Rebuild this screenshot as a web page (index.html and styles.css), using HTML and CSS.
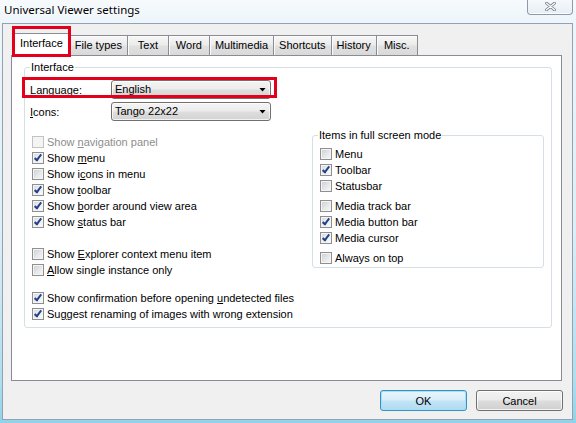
FILE: index.html
```html
<!DOCTYPE html>
<html>
<head>
<meta charset="utf-8">
<title>Universal Viewer settings</title>
<link rel="stylesheet" href="styles.css">
</head>
<body>
<div class="window">
  <div class="titlebar">
    <span class="title">Universal Viewer settings</span>
    <button class="close" aria-label="Close">
      <svg width="11" height="9" viewBox="0 0 11 9">
        <path d="M1.5 1.2 L9.5 7.8 M9.5 1.2 L1.5 7.8" stroke="#76828f" stroke-width="2.8" stroke-linecap="round"/>
        <path d="M1.5 1.2 L9.5 7.8 M9.5 1.2 L1.5 7.8" stroke="#ffffff" stroke-width="1.2" stroke-linecap="round"/>
      </svg>
    </button>
  </div>
  <div class="client">
    <div class="tabs">
      <div class="tab active">Interface</div>
      <div class="tab">File types</div>
      <div class="tab">Text</div>
      <div class="tab">Word</div>
      <div class="tab">Multimedia</div>
      <div class="tab">Shortcuts</div>
      <div class="tab">History</div>
      <div class="tab">Misc.</div>
    </div>
    <div class="panel">
      <fieldset class="group main">
        <legend>Interface</legend>
        <div class="field lang">
          <span class="label"><u>L</u>anguage:</span>
          <div class="combo"><span>English</span><span class="arrow"></span></div>
        </div>
        <div class="field">
          <span class="label"><u>I</u>cons:</span>
          <div class="combo"><span>Tango 22x22</span><span class="arrow"></span></div>
        </div>
        <div class="columns">
          <div class="options">
            <label class="chk disabled"><span class="box"></span><span class="text">Show <u>n</u>avigation panel</span></label>
            <label class="chk"><span class="box on"></span><span class="text">Show <u>m</u>enu</span></label>
            <label class="chk"><span class="box"></span><span class="text">Show i<u>c</u>ons in menu</span></label>
            <label class="chk"><span class="box on"></span><span class="text">Show <u>t</u>oolbar</span></label>
            <label class="chk"><span class="box on"></span><span class="text">Show <u>b</u>order around view area</span></label>
            <label class="chk"><span class="box on"></span><span class="text">Show <u>s</u>tatus bar</span></label>
            <label class="chk gap16"><span class="box"></span><span class="text">Show <u>E</u>xplorer context menu item</span></label>
            <label class="chk"><span class="box"></span><span class="text"><u>A</u>llow single instance only</span></label>
            <label class="chk gap12"><span class="box on"></span><span class="text">Show confirmation before opening <u>u</u>ndetected files</span></label>
            <label class="chk"><span class="box on"></span><span class="text">Su<u>g</u>gest renaming of images with wrong extension</span></label>
          </div>
          <fieldset class="group full">
            <legend>Items in full screen mode</legend>
            <label class="chk"><span class="box"></span><span class="text">Menu</span></label>
            <label class="chk"><span class="box on"></span><span class="text">Toolbar</span></label>
            <label class="chk"><span class="box"></span><span class="text">Statusbar</span></label>
            <label class="chk gap4"><span class="box"></span><span class="text">Media track bar</span></label>
            <label class="chk"><span class="box on"></span><span class="text">Media button bar</span></label>
            <label class="chk"><span class="box on"></span><span class="text">Media cursor</span></label>
            <label class="chk gap4"><span class="box"></span><span class="text">Always on top</span></label>
          </fieldset>
        </div>
      </fieldset>
    </div>
    <div class="buttons">
      <button class="btn default">OK</button>
      <button class="btn">Cancel</button>
    </div>
  </div>
</div>
</body>
</html>
```
FILE: styles.css
```css
html, body {
  margin: 0;
  padding: 0;
}

body {
  width: 576px;
  height: 423px;
  overflow: hidden;
  font: 11px "Liberation Sans", Arial, sans-serif;
  color: #000;
  background: linear-gradient(180deg, #f6fafd 0px, #edf5fa 24px, #dceef7 55%, #addef0 90%, #8fd2ea 100%);
}

.window {
  display: flex;
  flex-direction: column;
  width: 576px;
  height: 423px;
}

.titlebar {
  height: 23px;
  flex: none;
  display: flex;
  align-items: flex-start;
  padding-left: 4px;
}

.title {
  font: 11.5px/20px "Noto Sans", "Liberation Sans", sans-serif;
  color: #000;
  text-shadow: 0 0 6px #fff, 0 0 3px #fff;
}

.close {
  margin-left: auto;
  margin-right: 3px;
  margin-top: -1px;
  width: 46px;
  height: 16px;
  padding: 0;
  box-sizing: border-box;
  border: 1px solid #8e9aa7;
  border-top: none;
  border-radius: 0 0 4px 4px;
  background: linear-gradient(180deg, #f7fafc, #e6eef5);
  box-shadow: inset 0 -1px 0 #fff;
  display: flex;
  align-items: center;
  justify-content: center;
}

.close svg {
  display: block;
  margin-top: -1px;
}

.client {
  flex: none;
  margin: 0 3px 0 2px;
  height: 397px;
  box-sizing: border-box;
  border: 1px solid #93a2b1;
  background: #f0f0f0;
  padding: 9px 10px 8px 8px;
  display: flex;
  flex-direction: column;
}

.tabs {
  display: flex;
  align-items: flex-end;
  height: 22px;
  flex: none;
  padding-left: 2px;
  position: relative;
  z-index: 1;
}

.tab {
  height: 20px;
  box-sizing: border-box;
  min-width: 42px;
  padding: 0 5px;
  margin-right: -1px;
  border: 1px solid #898c95;
  border-bottom: none;
  line-height: 19px;
  text-align: center;
  white-space: nowrap;
  background: linear-gradient(180deg, #f7f7f7 0%, #ececec 45%, #e0e0e0 55%, #d9d9d9 100%);
  box-shadow: inset 1px 1px 0 #fbfbfb;
}

.tab.active {
  height: 23px;
  line-height: 18px;
  padding: 0 6px;
  margin-bottom: -1px;
  background: #fff;
  box-shadow: none;
  position: relative;
  z-index: 2;
}

.tab.active::after {
  content: "";
  position: absolute;
  left: -2px;
  right: -2px;
  top: -8px;
  bottom: -1px;
  border: 3px solid #e2001a;
  pointer-events: none;
}

.panel {
  height: 326px;
  flex: none;
  box-sizing: border-box;
  border: 1px solid #898c95;
  background: #fff;
  padding: 5px 9px 0 12px;
}

fieldset.group {
  margin: 0;
  min-width: 0;
  border: 1px solid #d5dfe5;
  border-radius: 3px;
}

fieldset.group legend {
  padding: 0 1px;
  line-height: 13px;
  font-size: 11px;
  color: #000;
}

.main {
  width: 528px;
  box-sizing: border-box;
  padding: 6px 7px 5px 5px;
}

.field {
  display: grid;
  grid-template-columns: 81px 160px;
  width: 241px;
  height: 19px;
  align-items: center;
  position: relative;
}

.field + .field {
  margin-top: 3px;
}

.field.lang::before {
  content: "";
  position: absolute;
  left: -8px;
  right: -6px;
  top: -3px;
  bottom: 1px;
  border: 3px solid #e2001a;
  pointer-events: none;
  z-index: 1;
}

.combo {
  height: 19px;
  box-sizing: border-box;
  border: 1px solid #707070;
  border-radius: 3px;
  background: linear-gradient(180deg, #f4f4f4 0%, #ececec 48%, #dedede 52%, #d2d2d2 100%);
  box-shadow: inset 0 0 0 1px rgba(255, 255, 255, 0.7);
  display: flex;
  align-items: center;
  padding: 0 4px 0 3px;
  line-height: 17px;
}

.combo .arrow {
  margin-left: auto;
  width: 7px;
  height: 4px;
  background: #000;
  clip-path: polygon(0 0, 100% 0, 50% 100%);
}

.columns {
  display: grid;
  grid-template-columns: 1fr 232px;
  margin-top: 8px;
  align-items: start;
}

.options {
  padding-top: 5px;
}

.chk {
  display: flex;
  align-items: center;
  height: 16px;
  white-space: nowrap;
}

.chk .text {
  white-space: pre;
}

.chk.gap16 { margin-top: 16px; }
.chk.gap12 { margin-top: 12px; }
.chk.gap4 { margin-top: 4px; }

.box {
  flex: none;
  width: 12px;
  height: 12px;
  box-sizing: border-box;
  margin: 0 3px 0 2px;
  border: 1px solid #8f8f8f;
  background: linear-gradient(135deg, #c9cdd3 0%, #e6e7e9 55%, #f8f8f8 100%);
  box-shadow: inset 0 0 0 1px #f4f4f4;
  position: relative;
}

.box.on {
  background: linear-gradient(135deg, #d6d9de 0%, #eeeff1 55%, #fbfbfb 100%);
}

.box.on::after {
  content: "";
  position: absolute;
  left: 3px;
  top: 0px;
  width: 2px;
  height: 6px;
  border: solid #23438a;
  border-width: 0 2px 2px 0;
  transform: rotate(38deg);
}

.chk.disabled {
  color: #8d8d8d;
}

.chk.disabled .box {
  border-color: #c2c2c2;
  background: #f4f4f4;
  box-shadow: none;
}

.full {
  width: 232px;
  box-sizing: border-box;
  padding: 4px 7px 1px 5px;
}

.buttons {
  display: flex;
  justify-content: flex-end;
  gap: 9px;
  margin-top: 9px;
  margin-right: -1px;
  flex: none;
}

.btn {
  width: 87px;
  height: 21px;
  box-sizing: border-box;
  padding: 0;
  font: 11px "Liberation Sans", Arial, sans-serif;
  color: #000;
  border: 1px solid #707070;
  border-radius: 3px;
  background: linear-gradient(180deg, #f2f2f2 0%, #ebebeb 48%, #dddddd 52%, #cfcfcf 100%);
  box-shadow: inset 0 0 0 1px rgba(255, 255, 255, 0.75);
}

.btn.default {
  border-color: #3c8fc4;
  background: linear-gradient(180deg, #e8f5fc 0%, #d9eefa 48%, #c3e4f6 52%, #b0daf1 100%);
  box-shadow: inset 0 0 0 1px #9fe3f7;
}

u {
  text-decoration: underline;
  text-underline-offset: 1px;
}
```
